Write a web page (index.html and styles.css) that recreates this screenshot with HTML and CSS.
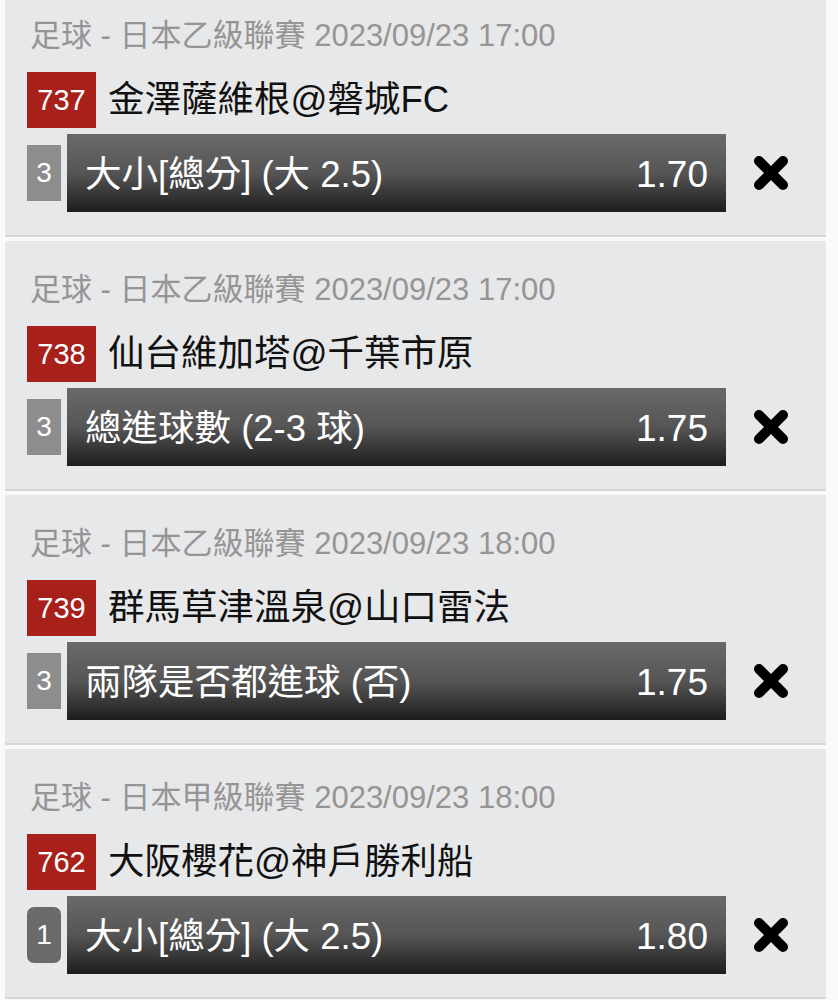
FILE: index.html
```html
<!DOCTYPE html>
<html lang="zh-Hant">
<head>
    <meta charset="UTF-8">
    <meta name="viewport" content="width=device-width, initial-scale=1.0">
    <title>投注單</title>
    <link rel="stylesheet" href="styles.css">
</head>
<body>
    <div class="slip">
        <div class="bet">
            <div class="bet-league">足球 - 日本乙級聯賽 2023/09/23 17:00</div>
            <div class="bet-match">
                <span class="match-no">737</span>
                <span class="match-name">金澤薩維根@磐城FC</span>
            </div>
            <div class="bet-line">
                <span class="line-no">3</span>
                <div class="line-bar">
                    <span class="line-name">大小[總分] (大 2.5)</span>
                    <span class="line-odds">1.70</span>
                </div>
                <button class="remove" type="button" aria-label="刪除">
                    <svg viewBox="0 0 36 36" width="36" height="36"><path d="M6 6 L30 30 M30 6 L6 30" /></svg>
                </button>
            </div>
        </div>

        <div class="bet">
            <div class="bet-league">足球 - 日本乙級聯賽 2023/09/23 17:00</div>
            <div class="bet-match">
                <span class="match-no">738</span>
                <span class="match-name">仙台維加塔@千葉市原</span>
            </div>
            <div class="bet-line">
                <span class="line-no">3</span>
                <div class="line-bar">
                    <span class="line-name">總進球數 (2-3 球)</span>
                    <span class="line-odds">1.75</span>
                </div>
                <button class="remove" type="button" aria-label="刪除">
                    <svg viewBox="0 0 36 36" width="36" height="36"><path d="M6 6 L30 30 M30 6 L6 30" /></svg>
                </button>
            </div>
        </div>

        <div class="bet">
            <div class="bet-league">足球 - 日本乙級聯賽 2023/09/23 18:00</div>
            <div class="bet-match">
                <span class="match-no">739</span>
                <span class="match-name">群馬草津溫泉@山口雷法</span>
            </div>
            <div class="bet-line">
                <span class="line-no">3</span>
                <div class="line-bar">
                    <span class="line-name">兩隊是否都進球 (否)</span>
                    <span class="line-odds">1.75</span>
                </div>
                <button class="remove" type="button" aria-label="刪除">
                    <svg viewBox="0 0 36 36" width="36" height="36"><path d="M6 6 L30 30 M30 6 L6 30" /></svg>
                </button>
            </div>
        </div>

        <div class="bet">
            <div class="bet-league">足球 - 日本甲級聯賽 2023/09/23 18:00</div>
            <div class="bet-match">
                <span class="match-no">762</span>
                <span class="match-name">大阪櫻花@神戶勝利船</span>
            </div>
            <div class="bet-line">
                <span class="line-no line-no-active">1</span>
                <div class="line-bar">
                    <span class="line-name">大小[總分] (大 2.5)</span>
                    <span class="line-odds">1.80</span>
                </div>
                <button class="remove" type="button" aria-label="刪除">
                    <svg viewBox="0 0 36 36" width="36" height="36"><path d="M6 6 L30 30 M30 6 L6 30" /></svg>
                </button>
            </div>
        </div>
    </div>
</body>
</html>
```

FILE: styles.css
```css
body {
    margin: 0;
    background-color: #fafafa;
    font-family: "Liberation Sans", "Noto Sans CJK TC", sans-serif;
    overflow: hidden;
}
.slip {
    width: 821px;
    margin: -13px 0 0 5px;
}
.bet {
    background-color: #e7e8ea;
    border-bottom: 2px solid #d5d6d8;
    margin-bottom: 4px;
    padding: 30px 0 23px 22px;
}
.bet-league {
    color: #959595;
    font-size: 31px;
    line-height: 38px;
    padding-left: 3px;
}
.bet-match {
    display: flex;
    align-items: center;
    gap: 12px;
    margin-top: 17px;
    height: 56px;
}
.match-no {
    width: 69px;
    height: 56px;
    background-color: #a8201a;
    color: #fff;
    font-size: 29px;
    line-height: 56px;
    text-align: center;
}
.match-name {
    color: #111;
    font-size: 36.5px;
    line-height: 56px;
}
.bet-line {
    display: flex;
    align-items: center;
    margin-top: 6px;
}
.line-no {
    width: 34px;
    height: 56px;
    background-color: #8d8d8d;
    color: #fff;
    font-size: 28px;
    line-height: 56px;
    text-align: center;
}
.line-no-active {
    background-color: #6a6a6a;
    border-radius: 7px;
}
.line-bar {
    display: flex;
    align-items: center;
    justify-content: space-between;
    width: 659px;
    height: 78px;
    margin-left: 6px;
    padding: 0 18px;
    box-sizing: border-box;
    background: linear-gradient(to bottom, #6a6a6a 0%, #555 50%, #1d1d1d 100%);
    color: #fff;
    font-size: 36.5px;
}
.line-name {
    margin-bottom: 4px;
}
.line-odds {
    font-size: 37px;
    margin-top: 4px;
}
.remove {
    width: 90px;
    height: 78px;
    padding: 0;
    border: none;
    background: none;
    display: flex;
    align-items: center;
    justify-content: center;
}
.remove svg path {
    stroke: #000;
    stroke-width: 10;
    stroke-linecap: round;
    fill: none;
}
```
